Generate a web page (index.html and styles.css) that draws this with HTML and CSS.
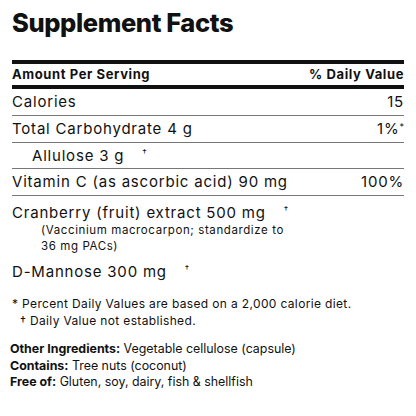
FILE: index.html
```html
<!DOCTYPE html>
<html lang="en">
<head>
  <meta charset="UTF-8">
  <meta name="viewport" content="width=device-width, initial-scale=1.0">
  <title>Supplement Facts</title>
  <link rel="stylesheet" href="styles.css">
</head>
<body>
  <h1 class="title">Supplement Facts</h1>
  <div class="facts">
    <div class="row head">
      <span>Amount Per Serving</span>
      <span>% Daily Value</span>
    </div>
    <div class="row">
      <span>Calories</span>
      <span>15</span>
    </div>
    <div class="row">
      <span>Total Carbohydrate 4 g</span>
      <span>1%<sup class="star">*</sup></span>
    </div>
    <div class="row sub">
      <span>Allulose 3 g<sup class="dag">†</sup></span>
    </div>
    <div class="row">
      <span>Vitamin C (as ascorbic acid) 90 mg</span>
      <span>100%</span>
    </div>
    <div class="item">
      <div>Cranberry (fruit) extract 500 mg<sup class="dag">†</sup></div>
      <div class="note">(Vaccinium macrocarpon; standardize to<br>36 mg PACs)</div>
    </div>
    <div class="item last">
      <div>D-Mannose 300 mg<sup class="dag">†</sup></div>
    </div>
  </div>
  <div class="foot">
    <div>* Percent Daily Values are based on a 2,000 calorie diet.</div>
    <div class="foot-dag">† Daily Value not established.</div>
  </div>
  <div class="extra">
    <div><b>Other Ingredients:</b> Vegetable cellulose (capsule)</div>
    <div><b>Contains:</b> Tree nuts (coconut)</div>
    <div><b>Free of:</b> Gluten, soy, dairy, fish &amp; shellfish</div>
  </div>
</body>
</html>
```

FILE: styles.css
```css
body {
  margin: 0;
  padding: 0 12px;
  font-family: 'Inter', 'DejaVu Sans', sans-serif;
  color: #111;
  background: #fff;
}
.title {
  margin: 0;
  padding-top: 7px;
  height: 53px;
  box-sizing: border-box;
  font-size: 25.5px;
  font-weight: 800;
  letter-spacing: -0.4px;
}
.facts {
  border-top: 4px solid #111;
  margin-top: 7px;
}
.row {
  display: flex;
  justify-content: space-between;
  align-items: center;
  font-size: 15px;
  letter-spacing: 0.8px;
  height: 27px;
  padding-bottom: 1px;
  box-sizing: border-box;
  border-bottom: 1px solid #777;
}
.row.head {
  font-size: 13px;
  font-weight: 700;
  letter-spacing: 0.6px;
  height: 25px;
  padding-bottom: 1px;
  border-bottom: 4px solid #111;
}
.row.sub {
  padding-left: 20px;
  height: 26px;
}
sup.dag {
  font-size: 9px;
  margin-left: 18px;
  vertical-align: 5px;
}
sup.star {
  font-size: 9px;
  letter-spacing: 0;
  vertical-align: 4px;
}
.item {
  font-size: 15px;
  letter-spacing: 0.8px;
  padding-top: 7px;
}
.item.last {
  padding-top: 8px;
}
.note {
  font-size: 11.5px;
  letter-spacing: 0.6px;
  line-height: 16px;
  padding-left: 29px;
}
.foot {
  font-size: 12px;
  letter-spacing: 0.35px;
  margin-top: 14px;
  line-height: 17px;
}
.foot-dag {
  padding-left: 8px;
}
.extra {
  margin-top: 12px;
  font-size: 12.4px;
  line-height: 16.5px;
  margin-left: -2px;
}
.extra b {
  font-weight: 700;
}
```
